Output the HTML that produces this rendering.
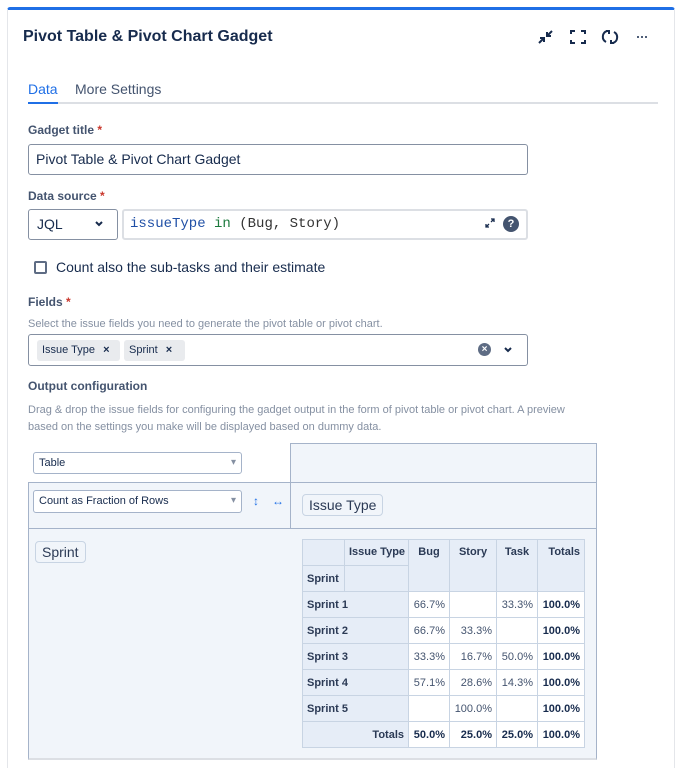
<!DOCTYPE html>
<html><head><meta charset="utf-8"><style>
*{box-sizing:border-box;margin:0;padding:0}
html,body{width:681px;height:768px;overflow:hidden}
body{background:#fff;font-family:"Liberation Sans",sans-serif;color:#172b4d;position:relative}
.a{position:absolute}
.card{left:7px;top:7px;width:668px;height:761px;border:1px solid #e4e6ea;border-bottom:0;border-top:3px solid #1f6fe6;border-radius:3px 3px 0 0}
.lbl{font-size:12px;font-weight:bold;color:#44546f}
.lbl b{color:#c9372c}
.inp{border:1px solid #8590a2;border-radius:3px;background:#fff}
.help{font-size:11px;color:#8590a2}
.pv{background:#f1f5fa;border-color:#a5b3c9;border-style:solid}
.sel{background:#fff;border:1px solid #a5b3c9;border-radius:3px;font-size:11px;padding:4px 5px;color:#172b4d}
.sel:after{content:"▾";position:absolute;right:5px;top:4px;color:#8590a2;font-size:10px}
.pill{border:1px solid #c8d4e3;border-radius:4px;background:#f1f5fa;font-size:14px;padding:2px 6px;color:#2b3a55}
table{border-collapse:collapse;font-size:11px;table-layout:fixed}
td,th{border:1px solid #c8d4e3;height:26px;padding:0 4px;text-align:right;white-space:nowrap}
th{background:#e6edf7;font-weight:bold;color:#2b3a55;vertical-align:top;padding-top:6px}
td{background:#fff;color:#44546f}
th.l{text-align:left}
.rh{vertical-align:middle;padding-top:0;text-align:left}
td.t{font-weight:bold;color:#172b4d}
.tag{background:#e9ebee;border-radius:3px;font-size:11px;padding:4px 5px;height:21px}
</style></head><body>
<div class="a card"></div>
<div class="a" style="left:23px;top:28px;font-size:16px;font-weight:bold">Pivot Table &amp; Pivot Chart Gadget</div>
<svg class="a" style="left:537px;top:28px" width="120" height="18" viewBox="0 0 120 18" fill="none" stroke="#172b4d" stroke-width="2">
<path d="M2 15l5-5M3 10h4v4M15 3l-5 5M10 4v4h4"/>
<path d="M34 6V3h4M44 3h4v3M48 12v3h-4M38 15h-4v-3"/>
<path d="M70 3a6 6 0 0 0 -1 11M69 3h3v3M76 15a6 6 0 0 0 1 -11M77 15h-3v-3"/>
<circle cx="101" cy="9" r="1" fill="#172b4d" stroke="none"/><circle cx="105" cy="9" r="1" fill="#172b4d" stroke="none"/><circle cx="109" cy="9" r="1" fill="#172b4d" stroke="none"/>
</svg>
<div class="a" style="left:28px;top:81px;font-size:14px;color:#1f6fe6">Data</div>
<div class="a" style="left:75px;top:81px;font-size:14px;color:#44546f">More Settings</div>
<div class="a" style="left:28px;top:102px;width:630px;height:2px;background:#dcdfe4"></div>
<div class="a" style="left:28px;top:102px;width:30px;height:2px;background:#1f6fe6"></div>
<div class="a lbl" style="left:28px;top:123px">Gadget title <b>*</b></div>
<div class="a inp" style="left:28px;top:144px;width:500px;height:31px;font-size:14px;padding:6px 7px">Pivot Table &amp; Pivot Chart Gadget</div>
<div class="a lbl" style="left:28px;top:189px">Data source <b>*</b></div>
<div class="a inp" style="left:28px;top:209px;width:90px;height:31px;font-size:14px;padding:6px 8px">JQL</div>
<svg class="a" style="left:94px;top:220px" width="10" height="8" fill="none" stroke="#172b4d" stroke-width="2"><path d="M2 2l3 3 3-3"/></svg>
<div class="a" style="left:122px;top:209px;width:406px;height:31px;border:2px solid #dcdfe4;border-radius:3px;font-family:'Liberation Mono',monospace;font-size:14px;padding:5px 6px;color:#333">
<span style="color:#1f4fa6">issueType</span> <span style="color:#1d7a3e">in</span> (Bug, Story)</div>
<svg class="a" style="left:484px;top:217px" width="12" height="12" fill="none" stroke="#172b4d" stroke-width="1.3"><path d="M2 10l3-3M2 7v3h3M10 2l-3 3M7 2h3v3"/></svg>
<div class="a" style="left:503px;top:216px;width:16px;height:16px;border-radius:50%;background:#44546f;color:#fff;font-size:11px;font-weight:bold;text-align:center;line-height:16px">?</div>
<div class="a" style="left:34px;top:261px;width:13px;height:13px;border:2px solid #5e6c84;border-radius:2px"></div>
<div class="a" style="left:56px;top:259px;font-size:14px">Count also the sub-tasks and their estimate</div>
<div class="a lbl" style="left:28px;top:295px">Fields <b>*</b></div>
<div class="a help" style="left:28px;top:318px">Select the issue fields you need to generate the pivot table or pivot chart.</div>
<div class="a inp" style="left:28px;top:334px;width:500px;height:32px"></div>
<div class="a tag" style="left:37px;top:340px;width:83px">Issue Type <span style="margin-left:5px;font-weight:bold">×</span></div>
<div class="a tag" style="left:124px;top:340px;width:61px">Sprint <span style="margin-left:5px;font-weight:bold">×</span></div>
<div class="a" style="left:478px;top:343px;width:13px;height:13px;border-radius:50%;background:#5e6c84;color:#fff;font-size:10px;font-weight:bold;text-align:center;line-height:13px">×</div>
<svg class="a" style="left:503px;top:346px" width="10" height="8" fill="none" stroke="#172b4d" stroke-width="2"><path d="M2 2l3 3 3-3"/></svg>
<div class="a lbl" style="left:28px;top:379px">Output configuration</div>
<div class="a help" style="left:28px;top:402px;line-height:17px;width:620px">Drag &amp; drop the issue fields for configuring the gadget output in the form of pivot table or pivot chart. A preview<br>based on the settings you make will be displayed based on dummy data.</div>

<div class="a pv" style="left:290px;top:443px;width:307px;height:40px;border-width:1px 1px 0 1px"></div>
<div class="a pv" style="left:28px;top:482px;width:569px;height:47px;border-width:1px 1px 1px 1px"></div>
<div class="a pv" style="left:28px;top:529px;width:263px;height:231px;border-width:0 1px 2px 1px;border-bottom-color:#dcdfe4"></div>
<div class="a pv" style="left:290px;top:529px;width:307px;height:231px;border-width:0 1px 2px 0;border-bottom-color:#dcdfe4"></div>
<div class="a" style="left:290px;top:482px;width:1px;height:47px;background:#a5b3c9"></div>
<div class="a sel" style="left:33px;top:452px;width:209px;height:22px">Table</div>
<div class="a sel" style="left:33px;top:490px;width:209px;height:23px">Count as Fraction of Rows</div>
<div class="a" style="left:253px;top:494px;font-size:12px;color:#1f6fe6">↕</div>
<div class="a" style="left:272px;top:494px;font-size:12px;color:#1f6fe6">↔</div>
<div class="a pill" style="left:302px;top:494px">Issue Type</div>
<div class="a pill" style="left:35px;top:541px">Sprint</div>
<table class="a" style="left:302px;top:539px;width:282px">
<colgroup><col style="width:42px"><col style="width:64px"><col style="width:41px"><col style="width:47px"><col style="width:41px"><col style="width:47px"></colgroup>
<tr><th></th><th class="l">Issue Type</th><th rowspan="2" style="text-align:center">Bug</th><th rowspan="2" style="text-align:center">Story</th><th rowspan="2" style="text-align:center">Task</th><th rowspan="2">Totals</th></tr>
<tr><th class="rh">Sprint</th><th></th></tr>
<tr><th class="rh" colspan="2">Sprint 1</th><td>66.7%</td><td></td><td>33.3%</td><td class="t">100.0%</td></tr>
<tr><th class="rh" colspan="2">Sprint 2</th><td>66.7%</td><td>33.3%</td><td></td><td class="t">100.0%</td></tr>
<tr><th class="rh" colspan="2">Sprint 3</th><td>33.3%</td><td>16.7%</td><td>50.0%</td><td class="t">100.0%</td></tr>
<tr><th class="rh" colspan="2">Sprint 4</th><td>57.1%</td><td>28.6%</td><td>14.3%</td><td class="t">100.0%</td></tr>
<tr><th class="rh" colspan="2">Sprint 5</th><td></td><td>100.0%</td><td></td><td class="t">100.0%</td></tr>
<tr><th class="rh" colspan="2" style="text-align:right">Totals</th><td class="t">50.0%</td><td class="t">25.0%</td><td class="t">25.0%</td><td class="t">100.0%</td></tr>
</table>
</body></html>
